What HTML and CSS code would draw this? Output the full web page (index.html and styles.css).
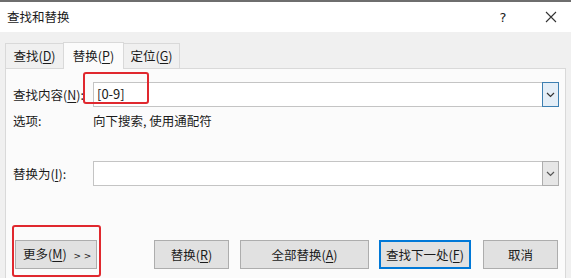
FILE: index.html
```html
<!DOCTYPE html>
<html>
<head>
<meta charset="utf-8">
<link rel="stylesheet" href="styles.css">
</head>
<body>
<div class="dialog">
  <div class="titlebar">
    <span class="title">查找和替换</span>
    <span class="help">?</span>
    <span class="close">
      <svg width="12" height="12" viewBox="0 0 12 12"><path d="M1 1L11 11M11 1L1 11" stroke="#333" stroke-width="1.1" fill="none"/></svg>
    </span>
  </div>
  <div class="tabs">
    <div class="tab tab-find">查找(<u>D</u>)</div>
    <div class="tab active">替换(<u>P</u>)</div>
    <div class="tab tab-goto">定位(<u>G</u>)</div>
  </div>
  <div class="panel">
    <div class="row row-find">
      <span class="label">查找内容(<u>N</u>):</span>
      <div class="combo">
        <span class="combo-text">[0-9]</span>
        <span class="combo-btn focus">
          <svg width="9" height="6" viewBox="0 0 9 6"><path d="M1 1L4.5 4.5L8 1" stroke="#333" stroke-width="1.2" fill="none"/></svg>
        </span>
      </div>
    </div>
    <div class="row row-opts">
      <span class="label">选项:</span>
      <span class="opts">向下搜索, 使用通配符</span>
    </div>
    <div class="row row-repl">
      <span class="label">替换为(<u>I</u>):</span>
      <div class="combo">
        <span class="combo-text"></span>
        <span class="combo-btn">
          <svg width="9" height="6" viewBox="0 0 9 6"><path d="M1 1L4.5 4.5L8 1" stroke="#555" stroke-width="1.2" fill="none"/></svg>
        </span>
      </div>
    </div>
    <div class="buttons">
      <button class="btn btn-more">更多(<u>M</u>) <span class="arrows">&gt; &gt;</span></button>
      <button class="btn btn-repl">替换(<u>R</u>)</button>
      <button class="btn btn-all">全部替换(<u>A</u>)</button>
      <button class="btn btn-next">查找下一处(<u>F</u>)</button>
      <button class="btn btn-cancel">取消</button>
    </div>
  </div>
  <div class="mark mark-find"></div>
  <div class="mark mark-more"></div>
</div>
</body>
</html>
```
FILE: styles.css
```css
* { box-sizing: border-box; }
html, body {
  margin: 0;
  padding: 0;
  width: 571px;
  height: 278px;
  overflow: hidden;
}
body {
  font-family: "Noto Sans CJK SC", "Noto Sans", sans-serif;
  font-size: 12.5px;
  color: #1b1b1b;
  background: #f0f0f0;
}
u { text-decoration-thickness: 1px; text-underline-offset: 2px; }
.dialog {
  position: relative;
  width: 571px;
  height: 278px;
  display: flex;
  flex-direction: column;
}
.titlebar {
  height: 32px;
  border-top: 2px solid #6e6e6e;
  background: #ffffff;
  display: flex;
  align-items: center;
  padding-left: 7px;
}
.title { flex: 1; line-height: 16px; }
.help {
  width: 20px;
  text-align: center;
  font-family: "DejaVu Sans", sans-serif;
  font-size: 13px;
  margin-right: 28px;
}
.close {
  width: 20px;
  display: flex;
  justify-content: center;
  margin-right: 10px;
}
.tabs {
  display: flex;
  align-items: flex-end;
  height: 36px;
  padding-left: 5px;
}
.tab {
  height: 25px;
  line-height: 24px;
  padding: 0;
  text-align: center;
  white-space: nowrap;
  border: 1px solid #d9d9d9;
  border-bottom: none;
  background: #f0f0f0;
}
.tab-find { width: 59px; }
.tab.active {
  height: 27px;
  line-height: 26px;
  background: #fbfbfb;
  width: 61px;
  position: relative;
  top: 1px;
  margin-left: -1px;
}
.tab-goto { width: 57px; margin-left: -1px; }
.panel {
  margin-left: 5px;
  width: 561px;
  flex: 1;
  background: #fbfbfb;
  border: 1px solid #d9d9d9;
  border-bottom: none;
  padding: 0 6px 0 7px;
  display: flex;
  flex-direction: column;
}
.row { display: flex; align-items: center; }
.label { width: 80px; flex: none; line-height: 16px; white-space: nowrap; }
.row-find { margin-top: 13px; }
.row-opts { margin-top: 6px; height: 16px; }
.row-repl { margin-top: 32px; }
.opts { line-height: 16px; }
.combo {
  flex: 1;
  height: 25px;
  border: 1px solid #c4c4c4;
  background: #ffffff;
  display: flex;
  align-items: stretch;
}
.combo-text {
  flex: 1;
  padding-left: 3px;
  line-height: 22px;
  font-size: 13px;
}
.combo-btn {
  width: 17px;
  border: 1px solid #adadad;
  background: #e6e6e6;
  margin: -1px -1px -1px 0;
  display: flex;
  align-items: center;
  justify-content: center;
}
.combo-btn.focus {
  border-color: #3c7fb1;
  background: #e4eef7;
}
.buttons {
  display: flex;
  margin-top: 54px;
  padding-left: 2px;
}
.btn {
  height: 29px;
  border: 1px solid #adadad;
  background: #e1e1e1;
  font-family: inherit;
  font-size: 12.5px;
  color: #1b1b1b;
  padding: 0;
  line-height: 16px;
  white-space: nowrap;
}
.btn-more { width: 82px; text-align: left; padding-left: 7px; }
.arrows { margin-left: 4px; font-size: 9px; letter-spacing: 0; font-family: "DejaVu Sans", sans-serif; }
.btn-repl { width: 75px; margin-left: 57px; }
.btn-all { width: 129px; margin-left: 11px; }
.btn-next { width: 92px; margin-left: 10px; border: 2px solid #0078d7; }
.btn-cancel { width: 75px; margin-left: 12px; }
.mark {
  position: absolute;
  border: 2px solid #e0282e;
  border-radius: 3px;
}
.mark-find { left: 83px; top: 72px; width: 66px; height: 32px; }
.mark-more { left: 12px; top: 225px; width: 89px; height: 52px; }
```
